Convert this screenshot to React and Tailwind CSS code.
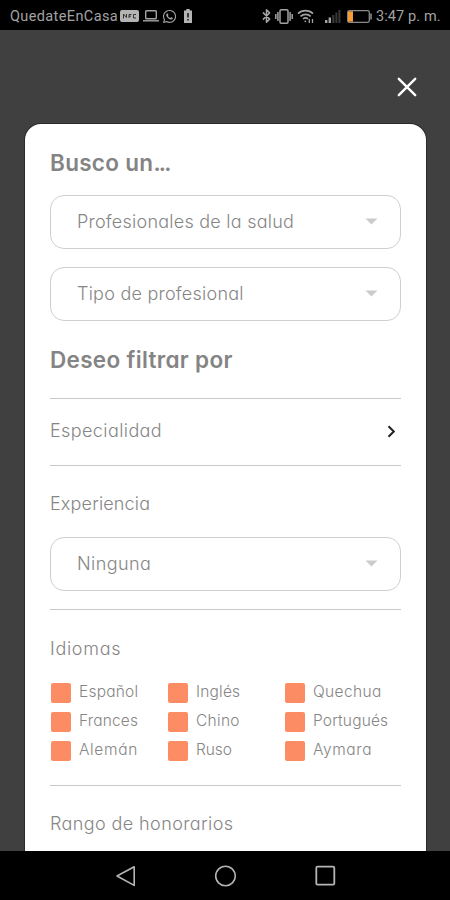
import React, { useState } from 'react';
import { Bluetooth } from 'lucide-react';
import { FaWhatsapp } from 'react-icons/fa';

const LANGUAGES = [
    { name: 'Español', tracking: 'tracking-[0.2px]' },
    { name: 'Inglés', tracking: 'tracking-[0.2px]' },
    { name: 'Quechua', tracking: 'tracking-[0.35px]' },
    { name: 'Frances', tracking: 'tracking-[0.15px]' },
    { name: 'Chino', tracking: 'tracking-[0.3px]' },
    { name: 'Portugués', tracking: 'tracking-[0.15px]' },
    { name: 'Alemán', tracking: 'tracking-[0.65px]' },
    { name: 'Ruso', tracking: 'tracking-[-0.1px]' },
    { name: 'Aymara', tracking: 'tracking-[0.6px]' },
];

/**
 * StatusBar - Android notification icons, signal, battery and clock
 */
const StatusBar = () => (
    <div className="h-[30px] shrink-0 bg-black flex items-center justify-between px-[10px] pt-[2px] text-[#a3a3a3] font-['Roboto',sans-serif] text-[14.5px]">
        <div className="flex items-center">
            <span className="w-[110px] pt-px whitespace-nowrap tracking-[0.38px]">QuedateEnCasa</span>
            <svg width="19" height="12" viewBox="0 0 19 12" fill="none">
                <rect width="19" height="12" rx="2" fill="#b4b4b4" />
                <path d="M3.5 8.5V4l3 3.5V4M9 8V4.5h2.5M9 6.2h2M16 4.5h-2.5V8H16" stroke="#333" strokeWidth="1" />
            </svg>
            <svg className="ml-1" width="16" height="12" viewBox="0 0 16 12" fill="none" stroke="currentColor" strokeWidth="1.4">
                <rect x="2.7" y="0.7" width="10.6" height="8" rx="0.8" />
                <path d="M0 10.8h16" />
            </svg>
            <FaWhatsapp className="ml-[3px] w-[15px] h-[15px]" />
            <svg className="ml-[7px]" width="8" height="14" viewBox="0 0 8 14">
                <path d="M2.3 0h3.4v1.5H8V14H0V1.5h2.3z" fill="#b4b4b4" />
                <path d="M4 4v4.5M4 10v1.6" stroke="#111" strokeWidth="1.5" />
            </svg>
        </div>
        <div className="flex items-center">
            <Bluetooth className="w-[15px] h-[16px]" strokeWidth={2.4} />
            <svg className="ml-px" width="18" height="15" viewBox="0 0 18 15" fill="none" stroke="currentColor" strokeWidth="1.5">
                <rect x="5" y="0.8" width="8" height="13.4" rx="1.2" />
                <path d="M2.9 3v9M15.1 3v9M0.8 5v5M17.2 5v5" />
            </svg>
            <svg className="ml-1" width="18" height="15" viewBox="0 0 18 15" fill="none" stroke="currentColor" strokeWidth="1.6">
                <path d="M1 4.6c4-4 11-4 15 0M3.5 7.4c3-2.7 7.4-2.7 10.2 0M6 10c1.6-1.4 3.6-1.4 5 0" />
                <circle cx="8.3" cy="12.3" r="0.9" fill="currentColor" stroke="none" />
                <path d="M12.3 10v4M15.5 10v4" strokeWidth="1.3" />
            </svg>
            <svg className="ml-[10px]" width="16" height="13" viewBox="0 0 16 13">
                <path d="M0 10h2.4v3H0zM3.6 7.5H6V13H3.6z" fill="#a3a3a3" />
                <path d="M7.2 5h2.2v8H7.2zM10.4 2.5h2v10.5h-2zM13.4 0h2v13h-2z" fill="#383838" />
            </svg>
            <svg className="ml-[6px]" width="25" height="13" viewBox="0 0 25 13" fill="none">
                <rect x="0.7" y="0.7" width="21.6" height="11.6" rx="1.5" stroke="#8a8a8a" strokeWidth="1.3" />
                <rect x="1" y="1.3" width="5" height="10.4" fill="#f79a38" />
                <path d="M24 3.5v6" stroke="#8a8a8a" strokeWidth="1.6" />
            </svg>
            <span className="ml-1 w-16 pt-px whitespace-nowrap tracking-[0.1px]">3:47 p. m.</span>
        </div>
    </div>
);

const SelectBox = ({ children }) => (
    <button className="w-full h-[54px] shrink-0 flex items-center justify-between pl-[26px] pr-[22px] pb-px rounded-[14px] border border-[#cfcfcf] text-left">
        {children}
        <svg width="13" height="7" viewBox="0 0 13 7">
            <path d="M0.5 0.5h12L6.5 6.5z" fill="#cbcbcb" />
        </svg>
    </button>
);

const Divider = () => <div className="h-px shrink-0 bg-[#c9c9c9]" />;

/**
 * NavBar - Android back, home and recents buttons
 */
const NavBar = () => (
    <div className="h-[49px] shrink-0 bg-black flex items-center justify-center gap-[76px]">
        <svg width="24" height="24" viewBox="0 0 24 24" fill="none" stroke="#b5b5b5" strokeWidth="1.6" strokeLinejoin="round">
            <path d="M21.2 2.8v18.6L4 12z" />
        </svg>
        <svg width="24" height="24" viewBox="0 0 24 24" fill="none" stroke="#b5b5b5" strokeWidth="1.6">
            <circle cx="12.5" cy="12" r="9.8" />
        </svg>
        <svg width="24" height="24" viewBox="0 0 24 24" fill="none" stroke="#b5b5b5" strokeWidth="1.8">
            <rect x="3.3" y="2.7" width="18" height="18" rx="1.2" />
        </svg>
    </div>
);

const App = () => {
    const [selected, setSelected] = useState(new Set(LANGUAGES.map(l => l.name)));

    // Toggle individual language
    const toggleLanguage = (name) => {
        setSelected(prev => {
            const next = new Set(prev);
            if (next.has(name)) {
                next.delete(name);
            } else {
                next.add(name);
            }
            return next;
        });
    };

    return (
        <div className="w-full h-[900px] flex flex-col overflow-hidden bg-[#404040] font-['Inter',sans-serif] [font-feature-settings:'cv11']">
            <StatusBar />

            {/* Close button */}
            <div className="h-[94px] shrink-0 flex justify-end pt-[47px] pr-[33px]">
                <button className="w-5 h-5">
                    <svg width="20" height="20" viewBox="0 0 20 20" stroke="#fff" strokeWidth="2.4" strokeLinecap="round">
                        <path d="M1.8 1.8l16.4 16.4M18.2 1.8L1.8 18.2" />
                    </svg>
                </button>
            </div>

            {/* Filter card */}
            <div className="flex-1 min-h-0 ml-[25px] w-[401px] px-[25px] pt-[23px] flex flex-col overflow-hidden bg-white rounded-t-2xl ring-1 ring-[#2a2a2a] text-[18px] font-[350] text-[#868686]">
                <h2 className="h-8 shrink-0 leading-8 mb-4 text-[22.5px] font-semibold text-[#848484]">
                    <span className="tracking-[0.3px]">Busco un</span>
                    <span className="tracking-[-1.8px]">...</span>
                </h2>
                <SelectBox><span className="pb-px tracking-[0.24px]">Profesionales de la salud</span></SelectBox>
                <div className="h-[18px] shrink-0" />
                <SelectBox><span className="pb-px tracking-[0.24px]">Tipo de profesional</span></SelectBox>

                <h2 className="h-8 shrink-0 leading-8 mt-[23px] mb-[22px] text-[22.5px] font-semibold text-[#848484]">
                    <span className="tracking-[0.32px]">Deseo filtrar por</span>
                </h2>
                <Divider />
                <button className="h-[66px] shrink-0 flex items-center justify-between pr-[5px] pb-px text-left">
                    <span className="pb-[3px] tracking-[0.4px]">Especialidad</span>
                    <svg width="9" height="13" viewBox="0 0 9 13" fill="none" stroke="#222" strokeWidth="2">
                        <path d="M1.5 1.2l5.3 5.3-5.3 5.3" />
                    </svg>
                </button>
                <Divider />

                <h3 className="h-[71px] shrink-0 pt-[26px] leading-6"><span className="tracking-[0.15px]">Experiencia</span></h3>
                <SelectBox><span className="pb-px tracking-[0.4px]">Ninguna</span></SelectBox>
                <div className="h-[18px] shrink-0" />
                <Divider />

                <h3 className="h-[73px] shrink-0 pt-[27px] leading-6"><span className="tracking-[0.7px]">Idiomas</span></h3>
                <div className="h-[102px] shrink-0 grid grid-cols-3 auto-rows-[20px] gap-y-[9px] text-[15.5px]">
                    {LANGUAGES.map(({ name, tracking }) => (
                        <button
                            key={name}
                            onClick={() => toggleLanguage(name)}
                            className="flex items-center pl-px text-left"
                        >
                            <span className={`w-5 h-5 rounded-[2px] ${selected.has(name) ? 'bg-[#fc8c64]' : 'border border-[#c9c9c9]'}`} />
                            <span className={`ml-2 pb-0.5 leading-5 ${tracking}`}>{name}</span>
                        </button>
                    ))}
                </div>
                <Divider />

                <h3 className="shrink-0 pt-[26px] leading-6"><span className="tracking-[0.4px]">Rango de honorarios</span></h3>
            </div>

            <NavBar />
        </div>
    );
};

export default App;
